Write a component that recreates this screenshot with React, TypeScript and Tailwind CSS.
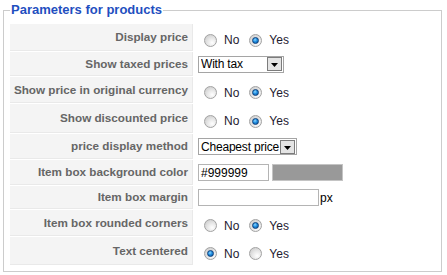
import React from 'react';

type Row = {
  label: string;
  h: string;
  kind: 'radio' | 'select' | 'color' | 'margin';
  yes?: boolean;
  value?: string;
  w?: string;
};

const rows: Row[] = [
  { label: 'Display price', h: 'h-[27px]', kind: 'radio', yes: true },
  { label: 'Show taxed prices', h: 'h-[24px]', kind: 'select', value: 'With tax', w: 'w-[86px]' },
  { label: 'Show price in original currency', h: 'h-[26px]', kind: 'radio', yes: true },
  { label: 'Show discounted price', h: 'h-[29px]', kind: 'radio', yes: true },
  { label: 'price display method', h: 'h-[25px]', kind: 'select', value: 'Cheapest price', w: 'w-[99px]' },
  { label: 'Item box background color', h: 'h-[25px]', kind: 'color' },
  { label: 'Item box margin', h: 'h-[23px]', kind: 'margin' },
  { label: 'Item box rounded corners', h: 'h-[26px]', kind: 'radio', yes: true },
  { label: 'Text centered', h: 'h-[28px]', kind: 'radio', yes: false },
];

const Radio = ({ checked }: { checked: boolean }) => (
  <span className="flex items-center justify-center w-[13px] h-[13px] rounded-full border border-[#a2a2a2] bg-[radial-gradient(circle_at_65%_70%,#ffffff_0%,#e6e6e6_45%,#c4c4c4_100%)]">
    {checked && (
      <span className="w-[7px] h-[7px] rounded-full border border-[#0d3f7a] bg-[radial-gradient(circle_at_40%_35%,#8fd6ff_0%,#1f8ee0_45%,#0a4f9c_100%)]" />
    )}
  </span>
);

const YesNo = ({ yes }: { yes: boolean }) => (
  <div className="flex items-center pl-[10px] pt-[5px]">
    <Radio checked={!yes} />
    <span className="ml-[7px] text-[12px] leading-none">No</span>
    <span className="ml-[10px]">
      <Radio checked={yes} />
    </span>
    <span className="ml-[7px] text-[12px] leading-none">Yes</span>
  </div>
);

const Select = ({ value, w }: { value: string; w: string }) => (
  <div className={`ml-[4px] flex items-center ${w} h-[17px] border border-[#a5a5a5] bg-white pl-[2px] pr-[1px]`}>
    <span className="flex-1 min-w-0 overflow-hidden whitespace-nowrap text-[12px] leading-none text-black tracking-[-0.2px]">
      {value}
    </span>
    <span className="flex shrink-0 items-center justify-center w-[15px] h-[14px] border border-[#7c7c7c] bg-[#e4e4e4]">
      <svg width="7" height="4" viewBox="0 0 7 4" className="mt-[2px]">
        <polygon points="0,0 7,0 3.5,4" fill="#000" />
      </svg>
    </span>
  </div>
);

export default function App() {
  return (
    <div className="w-[447px] h-[275px] bg-white pt-[2px] px-[3px] font-['Liberation_Sans',Arial,sans-serif] text-[#1e2030]">
      <fieldset className="w-[439px] border border-[#cccccc] px-[6px] pt-[6px] pb-[6px]">
        <legend className="px-[1px] text-[13px] leading-[16px] font-bold text-[#1f4fbf]">
          Parameters for products
        </legend>
        <div className="flex flex-col gap-[1px]">
          {rows.map((r) => (
            <div key={r.label} className={`flex gap-[1px] ${r.h}`}>
              <div className="w-[183px] shrink-0 flex items-center justify-end pr-[4px] bg-[#f4f4f4] border-r border-b border-[#e9e9e9] text-[11.7px] font-bold text-[#666666] whitespace-nowrap">
                {r.label}
              </div>
              <div className="flex-1 flex items-center">
                {r.kind === 'radio' && <YesNo yes={!!r.yes} />}
                {r.kind === 'select' && <Select value={r.value!} w={r.w!} />}
                {r.kind === 'color' && (
                  <div className="ml-[4px] flex items-center gap-[3px]">
                    <div className="w-[71px] h-[17px] border border-[#b4b4b4] bg-white flex items-center pl-[2px] text-[12px] leading-none text-black">
                      #999999
                    </div>
                    <div className="w-[71px] h-[17px] border border-[#c4c4c4] bg-[#999999]" />
                  </div>
                )}
                {r.kind === 'margin' && (
                  <div className="ml-[4px] flex items-center">
                    <div className="w-[121px] h-[17px] border border-[#b4b4b4] bg-white" />
                    <span className="ml-[1px] text-[12px] leading-none text-black">px</span>
                  </div>
                )}
              </div>
            </div>
          ))}
        </div>
      </fieldset>
    </div>
  );
}
